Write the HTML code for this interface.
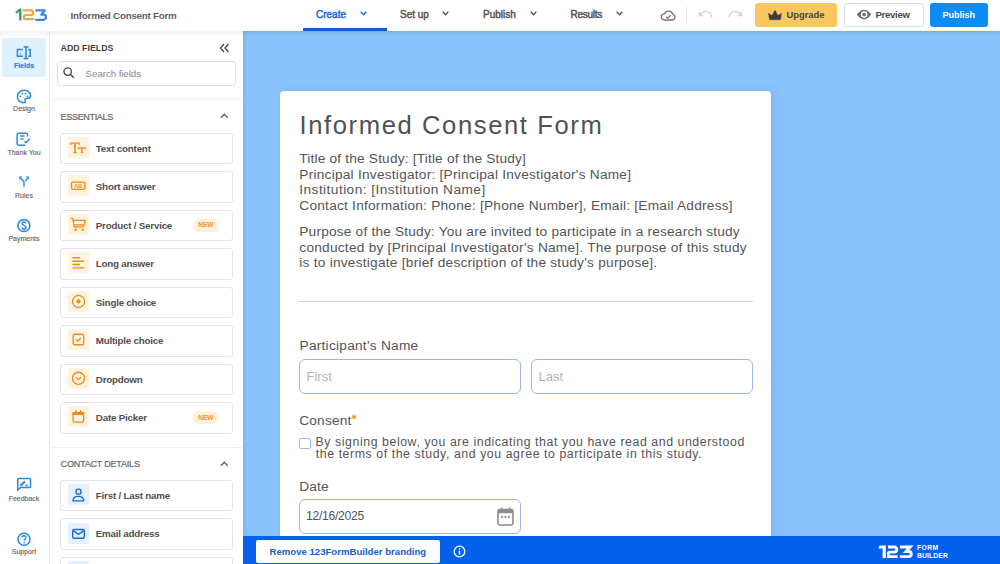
<!DOCTYPE html><html><head><meta charset="utf-8"><style>
*{box-sizing:border-box;margin:0;padding:0}
html,body{width:1000px;height:564px;overflow:hidden;background:#fff;font-family:"Liberation Sans",sans-serif;position:relative}
.a{position:absolute}
svg.a{overflow:visible}
</style></head><body>
<div class="a" style="left:243px;top:31px;width:757px;height:505px;background:#89c2fc;box-shadow:inset 3px 0 3px -1px rgba(40,80,140,0.10)"></div>
<div class="a" style="left:280px;top:91px;width:491.2px;height:460px;background:#fff;border-radius:4px;box-shadow:1px 0 3px rgba(60,110,180,0.10), 6px 0 14px rgba(30,70,130,0.05)"></div>
<div class="a" style="left:0;top:0;width:1000px;height:31px;background:#fff;box-shadow:0 1px 2px rgba(0,0,0,0.07)"></div>
<svg class="a" style="left:15px;top:8px" width="33" height="14" viewBox="0 0 33 14">
    <path d="M1.6 4.3 L4.6 1.9" stroke="#3a9a6a" stroke-width="2.3" fill="none" stroke-linecap="round"/>
    <path d="M5.3 1.6 V11.6" stroke="#3a9a6a" stroke-width="2.3" fill="none" stroke-linecap="round"/>
    <path d="M8.6 2.3 H15.8 A2.35 2.35 0 0 1 15.8 7 H10.6 A1.5 1.5 0 0 0 9.1 8.5 V11.1 H18.4" stroke="#f0a83c" stroke-width="2.2" fill="none" stroke-linejoin="round" stroke-linecap="round"/>
    <path d="M21.2 2.3 H29.8 L26.3 6.7 H28.4 A2.55 2.55 0 0 1 28.4 11.8 H21.2" stroke="#3b87e6" stroke-width="2.2" fill="none" stroke-linejoin="round" stroke-linecap="round"/>
  </svg>
<div class="a " style="left:70.6px;top:9.93px;font-size:9.8px;line-height:12.74px;font-weight:bold;color:#626262;letter-spacing:-0.24px;white-space:nowrap;">Informed Consent Form</div>
<div class="a " style="left:316px;top:7.54px;font-size:10px;line-height:13.0px;font-weight:normal;color:#1466d8;letter-spacing:0px;white-space:nowrap;-webkit-text-stroke:0.45px currentColor;">Create</div>
<svg class="a" style="left:359.5px;top:10.8px" width="7" height="5" viewBox="0 0 7 5"><path d="M0.7 0.8 L3.5 3.8 L6.3 0.8" stroke="#1466d8" stroke-width="1.3" fill="none"/></svg>
<div class="a" style="left:303px;top:28.3px;width:83.5px;height:2.7px;background:#0a5fd9"></div>
<div class="a " style="left:400px;top:7.54px;font-size:10px;line-height:13.0px;font-weight:normal;color:#555;letter-spacing:0px;white-space:nowrap;-webkit-text-stroke:0.45px currentColor;">Set up</div>
<svg class="a" style="left:442px;top:10.8px" width="7" height="5" viewBox="0 0 7 5"><path d="M0.7 0.8 L3.5 3.8 L6.3 0.8" stroke="#555" stroke-width="1.3" fill="none"/></svg>
<div class="a " style="left:483px;top:7.54px;font-size:10px;line-height:13.0px;font-weight:normal;color:#555;letter-spacing:0px;white-space:nowrap;-webkit-text-stroke:0.45px currentColor;">Publish</div>
<svg class="a" style="left:529.5px;top:10.8px" width="7" height="5" viewBox="0 0 7 5"><path d="M0.7 0.8 L3.5 3.8 L6.3 0.8" stroke="#555" stroke-width="1.3" fill="none"/></svg>
<div class="a " style="left:570.5px;top:7.54px;font-size:10px;line-height:13.0px;font-weight:normal;color:#555;letter-spacing:-0.25px;white-space:nowrap;-webkit-text-stroke:0.45px currentColor;">Results</div>
<svg class="a" style="left:616px;top:10.8px" width="7" height="5" viewBox="0 0 7 5"><path d="M0.7 0.8 L3.5 3.8 L6.3 0.8" stroke="#555" stroke-width="1.3" fill="none"/></svg>
<svg class="a" style="left:660px;top:9px" width="17" height="13" viewBox="0 0 17 13">
    <path d="M4.3 11 H12.2 A2.9 2.9 0 0 0 12.7 5.3 A4.4 4.4 0 0 0 4.4 4.9 A3.05 3.05 0 0 0 4.3 11 Z" stroke="#767676" stroke-width="1.35" fill="none"/>
    <path d="M5.9 7.7 L7.6 9.2 L10.6 6.3" stroke="#767676" stroke-width="1.3" fill="none"/>
  </svg>
<div class="a" style="left:686px;top:7px;width:1px;height:16px;background:#e2e2e2"></div>
<svg class="a" style="left:698px;top:10px" width="15" height="9" viewBox="0 0 15 9">
    <path d="M1.5 2 V5.5 H5 M1.8 5.3 A6 5 0 0 1 13.5 7.5" stroke="#d4d4d4" stroke-width="1.4" fill="none"/></svg>
<svg class="a" style="left:728px;top:10px" width="15" height="9" viewBox="0 0 15 9">
    <path d="M13.5 2 V5.5 H10 M13.2 5.3 A6 5 0 0 0 1.5 7.5" stroke="#d4d4d4" stroke-width="1.4" fill="none"/></svg>
<div class="a" style="left:755px;top:3px;width:82px;height:23.5px;background:#f6c85f;border-radius:3px"></div>
<svg class="a" style="left:768px;top:10px" width="14" height="10" viewBox="0 0 14 10">
    <path d="M0.5 3.2 L4 5.6 L7 0.2 L10 5.6 L13.5 3.2 L12.5 9.7 H1.5 Z" fill="#3d3d42" stroke="#3d3d42" stroke-width="0.4" stroke-linejoin="round"/></svg>
<div class="a " style="left:786.5px;top:9.43px;font-size:9.4px;line-height:12.22px;font-weight:bold;color:#474540;letter-spacing:0px;white-space:nowrap;">Upgrade</div>
<div class="a" style="left:844px;top:3px;width:79.5px;height:23.5px;background:#fff;border:1px solid #dcdcdc;border-radius:3px"></div>
<svg class="a" style="left:856px;top:9px" width="16" height="11" viewBox="0 0 16 11">
    <path d="M0.8 5.6 Q8 -4 15.2 5.6 Q8 15.2 0.8 5.6 Z" fill="#6e6e6e"/>
    <circle cx="8.1" cy="5.6" r="3.3" fill="#fff"/><circle cx="8.1" cy="5.6" r="1.8" fill="#6e6e6e"/></svg>
<div class="a " style="left:875.5px;top:9.43px;font-size:9.6px;line-height:12.48px;font-weight:bold;color:#4a4a4a;letter-spacing:-0.3px;white-space:nowrap;">Preview</div>
<div class="a" style="left:930px;top:3px;width:58px;height:23.5px;background:#0c8df6;border-radius:3px"></div>
<div class="a " style="left:942.5px;top:10.03px;font-size:9px;line-height:11.7px;font-weight:bold;color:#fff;letter-spacing:0px;white-space:nowrap;">Publish</div>
<div class="a" style="left:0;top:31px;width:50px;height:533px;background:#fff;border-right:1px solid #ececec"></div>
<div class="a" style="left:2px;top:38px;width:44px;height:39px;background:#dff1fe;border-radius:3px"></div>
<svg class="a" style="left:16px;top:46px" width="16" height="14" viewBox="0 0 16 14">
    <g stroke="#2a86df" fill="none" stroke-width="1.5">
      <path d="M7 3.6 H1.4 V10.2 H7"/><path d="M12.3 3.6 H14.2 V10.2 H12.3"/>
      <path d="M10 0.9 V12.6 M7.6 0.9 H12.4 M7.6 12.6 H12.4"/></g>
    <path d="M3.6 8.8 L4.6 5.8 L5.6 8.8 Z" fill="#6fb0ee"/></svg>
<div class="a" style="left:0;width:48px;text-align:center;top:60.97px;font-size:7px;line-height:10px;color:#2a86df;font-weight:bold;white-space:nowrap;-webkit-text-stroke:0.15px currentColor">Fields</div>
<svg class="a" style="left:16px;top:88.7px" width="16" height="15" viewBox="0 0 16 15">
    <path d="M8 1.3 C12 1.3 14.6 3.8 14.6 6.6 C14.6 8.6 13.2 9.4 11.4 9.4 H10.2 C9.2 9.4 8.8 10.2 9.2 11.2 C9.7 12.4 9.2 13.7 7.8 13.7 C4.2 13.7 1.4 11 1.4 7.5 C1.4 4 4.2 1.3 8 1.3 Z" stroke="#2a86df" stroke-width="1.5" fill="none"/>
    <circle cx="6.3" cy="4.6" r="0.9" fill="#2a86df"/><circle cx="9.4" cy="4.6" r="0.9" fill="#2a86df"/>
    <circle cx="4.4" cy="7.3" r="0.9" fill="#2a86df"/><circle cx="11.5" cy="7.3" r="0.9" fill="#2a86df"/></svg>
<div class="a" style="left:0;width:48px;text-align:center;top:104.37px;font-size:7px;line-height:10px;color:#666;font-weight:normal;white-space:nowrap;-webkit-text-stroke:0.15px currentColor">Design</div>
<svg class="a" style="left:16px;top:131.6px" width="16" height="15" viewBox="0 0 16 15">
    <path d="M11.6 4.5 V2.9 C11.6 1.9 10.9 1.3 9.9 1.3 H2.8 C1.8 1.3 1.1 1.9 1.1 2.9 V11.6 C1.1 12.6 1.8 13.3 2.8 13.3 H9.3" stroke="#2a86df" stroke-width="1.5" fill="none"/>
    <path d="M4.2 4 H8.6 M4.2 6.9 H7.7" stroke="#2a86df" stroke-width="1.4" fill="none"/>
    <path d="M8.6 9.3 L9.9 10.7 L13.8 6.8" stroke="#2a86df" stroke-width="1.5" fill="none"/></svg>
<div class="a" style="left:0;width:48px;text-align:center;top:147.57px;font-size:7px;line-height:10px;color:#666;font-weight:normal;white-space:nowrap;-webkit-text-stroke:0.15px currentColor">Thank You</div>
<svg class="a" style="left:17.9px;top:176.4px" width="12" height="11.2" viewBox="0 0 14 13">
    <path d="M7 12.6 V7.6 C7 6.8 6.6 6.2 6 5.6 L2.6 2.3" stroke="#2a86df" stroke-width="1.6" fill="none"/>
    <path d="M1.4 0.6 H5.2 L1.4 4.4 Z" fill="#2a86df"/>
    <path d="M8.4 6 L11.4 3" stroke="#2a86df" stroke-width="1.6" fill="none"/>
    <path d="M12.6 0.6 H8.8 L12.6 4.4 Z" fill="#2a86df"/></svg>
<div class="a" style="left:0;width:48px;text-align:center;top:190.87px;font-size:7px;line-height:10px;color:#666;font-weight:normal;white-space:nowrap;-webkit-text-stroke:0.15px currentColor">Rules</div>
<svg class="a" style="left:16px;top:217.6px" width="16" height="15" viewBox="0 0 16 15">
    <circle cx="7.9" cy="7.6" r="6" stroke="#2a86df" stroke-width="1.5" fill="none"/>
    <path d="M10 5.3 C9.7 4.5 8.9 4.1 7.9 4.1 C6.8 4.1 5.9 4.7 5.9 5.6 C5.9 7.7 10.1 7 10.1 9.4 C10.1 10.4 9.1 11 7.9 11 C6.8 11 6 10.5 5.7 9.8 M7.9 3 V4.1 M7.9 11 V12.2" stroke="#2a86df" stroke-width="1.4" fill="none"/></svg>
<div class="a" style="left:0;width:48px;text-align:center;top:233.57px;font-size:7px;line-height:10px;color:#666;font-weight:normal;white-space:nowrap;-webkit-text-stroke:0.15px currentColor">Payments</div>
<svg class="a" style="left:16px;top:476.6px" width="16" height="15" viewBox="0 0 16 15">
    <path d="M1.75 13.3 V2.4 C1.75 1.8 2.15 1.45 2.75 1.45 H13.55 C14.15 1.45 14.5 1.8 14.5 2.4 V9.5 C14.5 10.1 14.15 10.5 13.55 10.5 H4.4 Z" stroke="#2a86df" stroke-width="1.5" fill="none" stroke-linejoin="round"/>
    <path d="M5 8.2 L8.3 4.9" stroke="#2a86df" stroke-width="2.1" stroke-linecap="round"/>
    <path d="M9.3 8.4 H11.9" stroke="#2a86df" stroke-width="1.5"/></svg>
<div class="a" style="left:0;width:48px;text-align:center;top:493.57px;font-size:7px;line-height:10px;color:#666;font-weight:normal;white-space:nowrap;-webkit-text-stroke:0.15px currentColor">Feedback</div>
<svg class="a" style="left:16px;top:531.6px" width="16" height="15" viewBox="0 0 16 15">
    <circle cx="8" cy="7.3" r="6" stroke="#2a86df" stroke-width="1.5" fill="none"/>
    <path d="M5.9 5.6 C5.9 4.4 6.8 3.7 8 3.7 C9.2 3.7 10.1 4.4 10.1 5.5 C10.1 7 8.1 7.1 8.1 8.8" stroke="#2a86df" stroke-width="1.4" fill="none"/>
    <circle cx="8.1" cy="10.6" r="0.85" fill="#2a86df"/></svg>
<div class="a" style="left:0;width:48px;text-align:center;top:547.07px;font-size:7px;line-height:10px;color:#666;font-weight:normal;white-space:nowrap;-webkit-text-stroke:0.15px currentColor">Support</div>
<div class="a" style="left:50px;top:31px;width:193px;height:533px;background:#fff"></div>
<div class="a " style="left:60.6px;top:42.63px;font-size:8.8px;line-height:11.44px;font-weight:bold;color:#444;letter-spacing:0px;white-space:nowrap;">ADD FIELDS</div>
<svg class="a" style="left:219px;top:43px" width="11" height="10" viewBox="0 0 11 10"><path d="M5 1 L1.5 5 L5 9 M9.5 1 L6 5 L9.5 9" stroke="#444" stroke-width="1.3" fill="none"/></svg>
<div class="a" style="left:57px;top:61px;width:179px;height:25px;border:1px solid #e2e2e2;border-radius:3px;background:#fff"></div>
<svg class="a" style="left:63.3px;top:67.3px" width="12" height="12" viewBox="0 0 12 12"><circle cx="4.7" cy="4.6" r="3.75" stroke="#444" stroke-width="1.3" fill="none"/><path d="M7.6 7.6 L10.8 10.8" stroke="#444" stroke-width="1.4"/></svg>
<div class="a " style="left:85.6px;top:67.63px;font-size:9.8px;line-height:12.74px;font-weight:normal;color:#8a8a8a;letter-spacing:-0.1px;white-space:nowrap;">Search fields</div>
<div class="a" style="left:50px;top:99px;width:192px;height:1px;background:#efefef"></div>
<div class="a " style="left:60.6px;top:111.73px;font-size:9.1px;line-height:11.83px;font-weight:normal;color:#666;letter-spacing:-0.38px;white-space:nowrap;-webkit-text-stroke:0.2px currentColor;">ESSENTIALS</div>
<svg class="a" style="left:220.0px;top:113.3px" width="9" height="6" viewBox="0 0 9 6"><path d="M1 4.7 L4.35 1.3 L7.7 4.7" stroke="#5e5e5e" stroke-width="1.35" fill="none"/></svg>
<div class="a" style="left:60px;top:132.5px;width:173px;height:31.6px;border:1px solid #e4e4e4;border-radius:3px;background:#fff"></div>
<svg class="a" style="left:67.8px;top:136.8px" width="21" height="21" viewBox="0 0 21 21"><rect width="21" height="21" rx="2" fill="#fff3e0"/><g stroke="#ec8a1a" fill="none"><path d="M2.9 8 V6.1 H11.2 V8" stroke-width="1.3"/><path d="M7.05 6.1 V15.6" stroke-width="1.7"/><path d="M5.2 15.6 H8.9" stroke-width="1.1"/><path d="M10.3 12.2 V10.9 H17.7 V12.2" stroke-width="1.2"/><path d="M14 10.9 V15.6" stroke-width="1.5"/><path d="M12.6 15.6 H15.4" stroke-width="1"/></g></svg>
<div class="a " style="left:95.8px;top:142.63px;font-size:9.8px;line-height:12.74px;font-weight:bold;color:#505050;letter-spacing:-0.22px;white-space:nowrap;">Text content</div>
<div class="a" style="left:60px;top:171.0px;width:173px;height:31.6px;border:1px solid #e4e4e4;border-radius:3px;background:#fff"></div>
<svg class="a" style="left:67.8px;top:175.3px" width="21" height="21" viewBox="0 0 21 21"><rect width="21" height="21" rx="2" fill="#fff3e0"/><rect x="3.6" y="7.1" width="13.3" height="7.3" rx="1.4" stroke="#ec8a1a" stroke-width="1.4" fill="none"/><text x="10.25" y="13.3" text-anchor="middle" font-family="Liberation Sans" font-size="5.4" font-weight="bold" fill="#ec8a1a">AB</text></svg>
<div class="a " style="left:95.8px;top:181.13px;font-size:9.8px;line-height:12.74px;font-weight:bold;color:#505050;letter-spacing:-0.22px;white-space:nowrap;">Short answer</div>
<div class="a" style="left:60px;top:209.5px;width:173px;height:31.6px;border:1px solid #e4e4e4;border-radius:3px;background:#fff"></div>
<svg class="a" style="left:67.8px;top:213.8px" width="21" height="21" viewBox="0 0 21 21"><rect width="21" height="21" rx="2" fill="#fff3e0"/><path d="M3.2 4.4 H4.8 L6.2 12.8 H15.8 M5.3 6.3 H17.3 L16.3 10.8 H6" stroke="#ec8a1a" stroke-width="1.3" fill="none" stroke-linejoin="round" stroke-linecap="round"/><circle cx="7.6" cy="15.8" r="1.25" fill="#ec8a1a"/><circle cx="14.8" cy="15.8" r="1.25" fill="#ec8a1a"/></svg>
<div class="a " style="left:95.8px;top:219.63px;font-size:9.8px;line-height:12.74px;font-weight:bold;color:#505050;letter-spacing:-0.22px;white-space:nowrap;">Product / Service</div>
<div class="a" style="left:193.2px;top:218.5px;width:25.5px;height:13px;border-radius:7px;background:#fff1d9"></div>
<div class="a " style="left:198.2px;top:221.32px;font-size:6.6px;line-height:8.58px;font-weight:bold;color:#e8962a;letter-spacing:0px;white-space:nowrap;">NEW</div>
<div class="a" style="left:60px;top:248.0px;width:173px;height:31.6px;border:1px solid #e4e4e4;border-radius:3px;background:#fff"></div>
<svg class="a" style="left:67.8px;top:252.3px" width="21" height="21" viewBox="0 0 21 21"><rect width="21" height="21" rx="2" fill="#fff3e0"/><path d="M4.5 5.8 H11.9 M4.5 9.2 H16 M4.5 12.5 H11.9 M4.5 15.9 H16" stroke="#ec8a1a" stroke-width="1.4"/></svg>
<div class="a " style="left:95.8px;top:258.13px;font-size:9.8px;line-height:12.74px;font-weight:bold;color:#505050;letter-spacing:-0.22px;white-space:nowrap;">Long answer</div>
<div class="a" style="left:60px;top:286.5px;width:173px;height:31.6px;border:1px solid #e4e4e4;border-radius:3px;background:#fff"></div>
<svg class="a" style="left:67.8px;top:290.8px" width="21" height="21" viewBox="0 0 21 21"><rect width="21" height="21" rx="2" fill="#fff3e0"/><circle cx="10.5" cy="10.4" r="6.05" stroke="#ec8a1a" stroke-width="1.3" fill="none"/><circle cx="10.5" cy="10.4" r="2.1" fill="#ec8a1a"/></svg>
<div class="a " style="left:95.8px;top:296.63px;font-size:9.8px;line-height:12.74px;font-weight:bold;color:#505050;letter-spacing:-0.22px;white-space:nowrap;">Single choice</div>
<div class="a" style="left:60px;top:325.0px;width:173px;height:31.6px;border:1px solid #e4e4e4;border-radius:3px;background:#fff"></div>
<svg class="a" style="left:67.8px;top:329.3px" width="21" height="21" viewBox="0 0 21 21"><rect width="21" height="21" rx="2" fill="#fff3e0"/><rect x="5.15" y="5.25" width="10.5" height="10.5" rx="1.6" stroke="#ec8a1a" stroke-width="1.3" fill="none"/><path d="M7.9 10.6 L9.8 12.2 L12.8 9" stroke="#ec8a1a" stroke-width="1.3" fill="none"/></svg>
<div class="a " style="left:95.8px;top:335.13px;font-size:9.8px;line-height:12.74px;font-weight:bold;color:#505050;letter-spacing:-0.22px;white-space:nowrap;">Multiple choice</div>
<div class="a" style="left:60px;top:363.5px;width:173px;height:31.6px;border:1px solid #e4e4e4;border-radius:3px;background:#fff"></div>
<svg class="a" style="left:67.8px;top:367.8px" width="21" height="21" viewBox="0 0 21 21"><rect width="21" height="21" rx="2" fill="#fff3e0"/><circle cx="10.5" cy="10.3" r="6.05" stroke="#ec8a1a" stroke-width="1.3" fill="none"/><path d="M8.1 9.3 L10.5 11.7 L12.9 9.3" stroke="#ec8a1a" stroke-width="1.3" fill="none"/></svg>
<div class="a " style="left:95.8px;top:373.63px;font-size:9.8px;line-height:12.74px;font-weight:bold;color:#505050;letter-spacing:-0.22px;white-space:nowrap;">Dropdown</div>
<div class="a" style="left:60px;top:402.0px;width:173px;height:31.6px;border:1px solid #e4e4e4;border-radius:3px;background:#fff"></div>
<svg class="a" style="left:67.8px;top:406.3px" width="21" height="21" viewBox="0 0 21 21"><rect width="21" height="21" rx="2" fill="#fff3e0"/><rect x="5.05" y="6.6" width="10.6" height="9.55" rx="1.6" stroke="#ec8a1a" stroke-width="1.3" fill="none"/><rect x="4.4" y="6" width="11.9" height="3" rx="1" fill="#ec8a1a"/><path d="M8 3.9 V6.5 M12.7 3.9 V6.5" stroke="#ec8a1a" stroke-width="1.2"/></svg>
<div class="a " style="left:95.8px;top:412.13px;font-size:9.8px;line-height:12.74px;font-weight:bold;color:#505050;letter-spacing:-0.22px;white-space:nowrap;">Date Picker</div>
<div class="a" style="left:193.2px;top:411.0px;width:25.5px;height:13px;border-radius:7px;background:#fff1d9"></div>
<div class="a " style="left:198.2px;top:413.82px;font-size:6.6px;line-height:8.58px;font-weight:bold;color:#e8962a;letter-spacing:0px;white-space:nowrap;">NEW</div>
<div class="a" style="left:50px;top:446.5px;width:192px;height:1px;background:#efefef"></div>
<div class="a " style="left:60.6px;top:459.43px;font-size:9.1px;line-height:11.83px;font-weight:normal;color:#666;letter-spacing:-0.25px;white-space:nowrap;-webkit-text-stroke:0.2px currentColor;">CONTACT DETAILS</div>
<svg class="a" style="left:220.0px;top:461px" width="9" height="6" viewBox="0 0 9 6"><path d="M1 4.7 L4.35 1.3 L7.7 4.7" stroke="#5e5e5e" stroke-width="1.35" fill="none"/></svg>
<div class="a" style="left:60px;top:479.8px;width:173px;height:31.6px;border:1px solid #e4e4e4;border-radius:3px;background:#fff"></div>
<svg class="a" style="left:67.8px;top:484.1px" width="21" height="21" viewBox="0 0 21 21"><rect width="21" height="21" rx="2" fill="#e4f1fd"/><circle cx="10.5" cy="7.7" r="2.55" stroke="#1f6bd5" stroke-width="1.4" fill="none"/><path d="M4.95 16.9 C4.95 13.6 7.6 12.35 10.3 12.35 C13.2 12.35 15.7 13.6 15.7 16.9 Z" stroke="#1f6bd5" stroke-width="1.4" fill="none" stroke-linejoin="round"/></svg>
<div class="a " style="left:95.8px;top:489.93px;font-size:9.8px;line-height:12.74px;font-weight:bold;color:#505050;letter-spacing:-0.22px;white-space:nowrap;">First / Last name</div>
<div class="a" style="left:60px;top:518.2px;width:173px;height:31.6px;border:1px solid #e4e4e4;border-radius:3px;background:#fff"></div>
<svg class="a" style="left:67.8px;top:522.5px" width="21" height="21" viewBox="0 0 21 21"><rect width="21" height="21" rx="2" fill="#e4f1fd"/><rect x="4.7" y="6.5" width="11.6" height="8.7" rx="1.5" stroke="#1f6bd5" stroke-width="1.4" fill="none"/><path d="M5.2 7.6 L10.5 11.3 L15.8 7.6" stroke="#1f6bd5" stroke-width="1.4" fill="none"/></svg>
<div class="a " style="left:95.8px;top:528.33px;font-size:9.8px;line-height:12.74px;font-weight:bold;color:#505050;letter-spacing:-0.22px;white-space:nowrap;">Email address</div>
<div class="a" style="left:60px;top:556.8px;width:173px;height:31.6px;border:1px solid #e4e4e4;border-radius:3px;background:#fff"></div>
<svg class="a" style="left:67.8px;top:561.0999999999999px" width="21" height="21" viewBox="0 0 21 21"><rect width="21" height="21" rx="2" fill="#e4f1fd"/><rect x="4.7" y="6.5" width="11.6" height="8.7" rx="1.5" stroke="#1f6bd5" stroke-width="1.4" fill="none"/><path d="M5.2 7.6 L10.5 11.3 L15.8 7.6" stroke="#1f6bd5" stroke-width="1.4" fill="none"/></svg>
<div class="a " style="left:95.8px;top:566.93px;font-size:9.8px;line-height:12.74px;font-weight:bold;color:#505050;letter-spacing:-0.22px;white-space:nowrap;"></div>
<div class="a " style="left:299.5px;top:108.79px;font-size:25.6px;line-height:33.28px;font-weight:normal;color:#505055;letter-spacing:1.6px;white-space:nowrap;">Informed Consent Form</div>
<div class="a " style="left:299.3px;top:150.25px;font-size:13.7px;line-height:17.81px;font-weight:normal;color:#545456;letter-spacing:0.179px;white-space:nowrap;">Title of the Study: [Title of the Study]</div>
<div class="a " style="left:299.3px;top:165.80px;font-size:13.7px;line-height:17.81px;font-weight:normal;color:#545456;letter-spacing:0.234px;white-space:nowrap;">Principal Investigator: [Principal Investigator's Name]</div>
<div class="a " style="left:299.3px;top:181.35px;font-size:13.7px;line-height:17.81px;font-weight:normal;color:#545456;letter-spacing:0.44px;white-space:nowrap;">Institution: [Institution Name]</div>
<div class="a " style="left:299.3px;top:196.90px;font-size:13.7px;line-height:17.81px;font-weight:normal;color:#545456;letter-spacing:0.229px;white-space:nowrap;">Contact Information: Phone: [Phone Number], Email: [Email Address]</div>
<div class="a " style="left:299.3px;top:223.25px;font-size:13.7px;line-height:17.81px;font-weight:normal;color:#545456;letter-spacing:0.191px;white-space:nowrap;">Purpose of the Study: You are invited to participate in a research study</div>
<div class="a " style="left:299.3px;top:238.80px;font-size:13.7px;line-height:17.81px;font-weight:normal;color:#545456;letter-spacing:0.237px;white-space:nowrap;">conducted by [Principal Investigator's Name]. The purpose of this study</div>
<div class="a " style="left:299.3px;top:254.35px;font-size:13.7px;line-height:17.81px;font-weight:normal;color:#545456;letter-spacing:0.24px;white-space:nowrap;">is to investigate [brief description of the study's purpose].</div>
<div class="a" style="left:299px;top:300.5px;width:454px;height:1px;background:#bcd6f2"></div>
<div class="a " style="left:299.5px;top:337.35px;font-size:13.7px;line-height:17.81px;font-weight:normal;color:#545456;letter-spacing:0.25px;white-space:nowrap;">Participant's Name</div>
<div class="a" style="left:299px;top:359.2px;width:221.5px;height:35px;border:1.8px solid #95b8f0;border-radius:6px;background:#fff"></div>
<div class="a" style="left:531.3px;top:359.2px;width:221.5px;height:35px;border:1.8px solid #95b8f0;border-radius:6px;background:#fff"></div>
<div class="a " style="left:306.5px;top:368.85px;font-size:13px;line-height:16.9px;font-weight:normal;color:#b3b3b3;letter-spacing:0px;white-space:nowrap;">First</div>
<div class="a " style="left:538.5px;top:368.85px;font-size:13px;line-height:16.9px;font-weight:normal;color:#b3b3b3;letter-spacing:0px;white-space:nowrap;">Last</div>
<div class="a " style="left:299.2px;top:411.55px;font-size:13.7px;line-height:17.81px;font-weight:normal;color:#545456;letter-spacing:0.2px;white-space:nowrap;">Consent</div>
<svg class="a" style="left:350.5px;top:414.2px" width="6" height="6" viewBox="0 0 6 6"><path d="M3 0.4 V5.6 M0.75 1.7 L5.25 4.3 M0.75 4.3 L5.25 1.7" stroke="#e0a02c" stroke-width="1.25"/></svg>
<div class="a" style="left:299px;top:437.6px;width:11.6px;height:11.6px;border:1.7px solid #9abbf0;border-radius:2px;background:#fff"></div>
<div class="a " style="left:315.6px;top:435.34px;font-size:12.3px;line-height:15.99px;font-weight:normal;color:#545456;letter-spacing:0.575px;white-space:nowrap;">By signing below, you are indicating that you have read and understood</div>
<div class="a " style="left:315.8px;top:446.54px;font-size:12.3px;line-height:15.99px;font-weight:normal;color:#545456;letter-spacing:0.58px;white-space:nowrap;">the terms of the study, and you agree to participate in this study.</div>
<div class="a " style="left:299.2px;top:477.55px;font-size:13.7px;line-height:17.81px;font-weight:normal;color:#545456;letter-spacing:0.2px;white-space:nowrap;">Date</div>
<div class="a" style="left:299px;top:499.4px;width:221.5px;height:34.5px;border:1.8px solid #95b8f0;border-radius:6px;background:#fff"></div>
<div class="a " style="left:306px;top:508.74px;font-size:12.2px;line-height:15.86px;font-weight:normal;color:#545456;letter-spacing:-0.3px;white-space:nowrap;">12/16/2025</div>
<svg class="a" style="left:497px;top:507px" width="17" height="19" viewBox="0 0 17 19"><rect x="1" y="2.6" width="15" height="15.4" rx="2" stroke="#8c8c8c" stroke-width="1.6" fill="none"/><rect x="1" y="2.6" width="15" height="3.6" fill="#8c8c8c"/><path d="M4.6 0.6 V3.6 M12.4 0.6 V3.6" stroke="#8c8c8c" stroke-width="1.5"/><circle cx="5.2" cy="9.9" r="1.05" fill="#8c8c8c"/><circle cx="8.5" cy="9.9" r="1.05" fill="#8c8c8c"/><circle cx="11.8" cy="9.9" r="1.05" fill="#8c8c8c"/></svg>
<div class="a" style="left:243px;top:535.8px;width:757px;height:28.2px;background:#0361ee"></div>
<div class="a" style="left:256px;top:540px;width:184px;height:23px;background:#fff;border-radius:2px"></div>
<div class="a " style="left:269.5px;top:546.23px;font-size:9.6px;line-height:12.48px;font-weight:bold;color:#1262d2;letter-spacing:0px;white-space:nowrap;">Remove 123FormBuilder branding</div>
<svg class="a" style="left:453px;top:545px" width="13" height="13" viewBox="0 0 13 13"><circle cx="6.5" cy="6.5" r="5.3" stroke="#fff" stroke-width="1.3" fill="none"/><path d="M6.5 5.6 V9.6" stroke="#fff" stroke-width="1.4"/><circle cx="6.5" cy="3.7" r="0.8" fill="#fff"/></svg>
<svg class="a" style="left:878px;top:545px" width="36" height="14" viewBox="0 0 36 14">
  <path d="M0.4 3.6 L1.4 0.5 H7.8 V13 H4.6 V3.6 Z" fill="#fff"/>
  <path d="M10 1.95 H16.2 A2.6 2.6 0 0 1 16.2 7.15 H11.6 Q10.4 7.15 10.4 8.5 V11.6 H19.6" stroke="#fff" stroke-width="2.9" fill="none"/>
  <path d="M21.9 1.95 H32.2 L28 6.5 H30.7 A2.55 2.55 0 0 1 30.7 11.6 H21.9" stroke="#fff" stroke-width="2.9" fill="none" stroke-linejoin="miter"/>
</svg>
<div class="a " style="left:917px;top:543.72px;font-size:6.8px;line-height:8.84px;font-weight:bold;color:#fff;letter-spacing:0.35px;white-space:nowrap;">FORM</div>
<div class="a " style="left:917px;top:551.52px;font-size:6.8px;line-height:8.84px;font-weight:bold;color:#fff;letter-spacing:0.1px;white-space:nowrap;">BUILDER</div>
<div class="a" style="left:0;top:31px;width:1000px;height:6px;background:linear-gradient(rgba(0,0,0,0.055),rgba(0,0,0,0))"></div>
</body></html>
